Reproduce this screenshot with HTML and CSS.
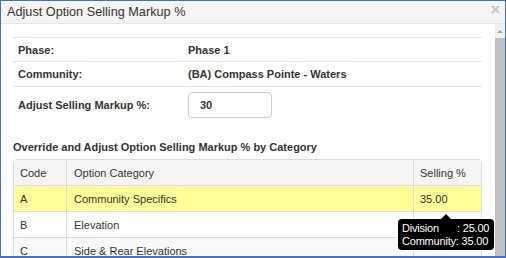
FILE: index.html
```html
<!DOCTYPE html>
<html>
<head>
<meta charset="utf-8">
<link rel="stylesheet" href="styles.css">
</head>
<body>
<div class="frame">
  <div class="header">
    <span class="title">Adjust Option Selling Markup %</span>
    <span class="close">&times;</span>
  </div>
  <div class="main">
    <div class="content">
      <div class="info">
        <div class="info-row"><div class="lbl">Phase:</div><div class="val">Phase 1</div></div>
        <div class="info-row"><div class="lbl">Community:</div><div class="val">(BA) Compass Pointe - Waters</div></div>
        <div class="info-row input-row"><div class="lbl lbl-in">Adjust Selling Markup %:</div><div class="val"><div class="inp">30</div></div></div>
      </div>
      <div class="section">Override and Adjust Option Selling Markup % by Category</div>
      <div class="grid">
        <div class="grow head"><div class="c1">Code</div><div class="c2">Option Category</div><div class="c3">Selling %</div></div>
        <div class="grow hl"><div class="c1">A</div><div class="c2">Community Specifics</div><div class="c3">35.00</div></div>
        <div class="grow"><div class="c1">B</div><div class="c2">Elevation</div><div class="c3"></div></div>
        <div class="grow alt"><div class="c1">C</div><div class="c2">Side &amp; Rear Elevations</div><div class="c3"></div></div>
      </div>
      <div class="tooltip">
        <div class="tl"><span class="tk">Division</span>: 25.00</div>
        <div class="tl"><span>Community</span>: 35.00</div>
      </div>
    </div>
    <div class="scrollbar">
      <div class="arrow"></div>
      <div class="thumb"></div>
    </div>
  </div>
</div>
</body>
</html>
```
FILE: styles.css
```css
* { box-sizing: border-box; }
html, body { margin: 0; padding: 0; background: #fff; }
body { font-family: "Liberation Sans", Arial, sans-serif; color: #333; font-size: 11px; }
.frame {
  width: 506px; height: 258px; border: 1px solid #4472c4; border-bottom-width: 2px;
  overflow: hidden; display: flex; flex-direction: column; position: relative;
}
.header {
  height: 23px; flex: none; background: #f5f5f5; border-bottom: 1px solid #e5e5e5;
  display: flex; align-items: center; justify-content: space-between; padding: 0 5px 0 6px;
}
.title { font-size: 12.7px; color: #333; }
.close { font-size: 16px; font-weight: bold; color: #c4c4c4; line-height: 1; margin-top: -4px; }
.main { flex: 1; display: flex; min-height: 0; }
.content { flex: 1; padding: 13px 13px 0 12px; position: relative; }
.scrollbar { width: 10px; flex: none; background: #f1f1f1; display: flex; flex-direction: column; align-items: center; }
.arrow { margin-top: 6px; width: 0; height: 0; border-left: 3px solid transparent; border-right: 3px solid transparent; border-bottom: 3px solid #a3a3a3; }
.thumb { margin-top: 5px; width: 100%; flex: 1; background: #c1c1c1; }
.info-row { display: flex; align-items: center; border-top: 1px solid #e3e3e3; height: 24px; font-weight: bold; }
.info-row + .info-row { height: 25px; }
.info-row.input-row { height: 38px; align-items: flex-start; padding-top: 5px; }
.lbl { width: 175px; padding-left: 5px; }
.lbl-in { padding-top: 7px; }
.val { flex: 1; }
.inp { width: 84px; height: 26px; border: 1px solid #ccc; border-radius: 4px; padding: 6px 0 0 11px; font-weight: bold; }
.section { font-weight: bold; padding-top: 15px; height: 35px; line-height: 16px; }
.grid { border: 1px solid #ddd; border-radius: 4px 4px 0 0; font-weight: normal; }
.grow { display: flex; height: 26px; border-top: 1px solid #ddd; }
.grow.head { border-top: none; height: 25px; background: #f5f5f5; }
.grow.hl { background: #ffff99; }
.grow.alt { background: #f9f9f9; }
.c1, .c2, .c3 { display: flex; align-items: center; padding-left: 6px; }
.c1 { width: 53px; border-right: 1px solid #ddd; }
.c2 { flex: 1; border-right: 1px solid #ddd; padding-left: 7px; }
.c3 { width: 67px; }
.tooltip {
  position: absolute; left: 397px; top: 195px; width: 96px; height: 31px;
  background: #000; color: #fff; border-radius: 4px; font-size: 11px; letter-spacing: -0.2px;
  padding: 3px 0 0 4px; line-height: 13px; white-space: nowrap;
}
.tooltip::before {
  content: ""; position: absolute; left: 43px; top: -5px; width: 0; height: 0;
  border-left: 5px solid transparent; border-right: 5px solid transparent; border-bottom: 5px solid #000;
}
.tk { display: inline-block; width: 55px; }
```
